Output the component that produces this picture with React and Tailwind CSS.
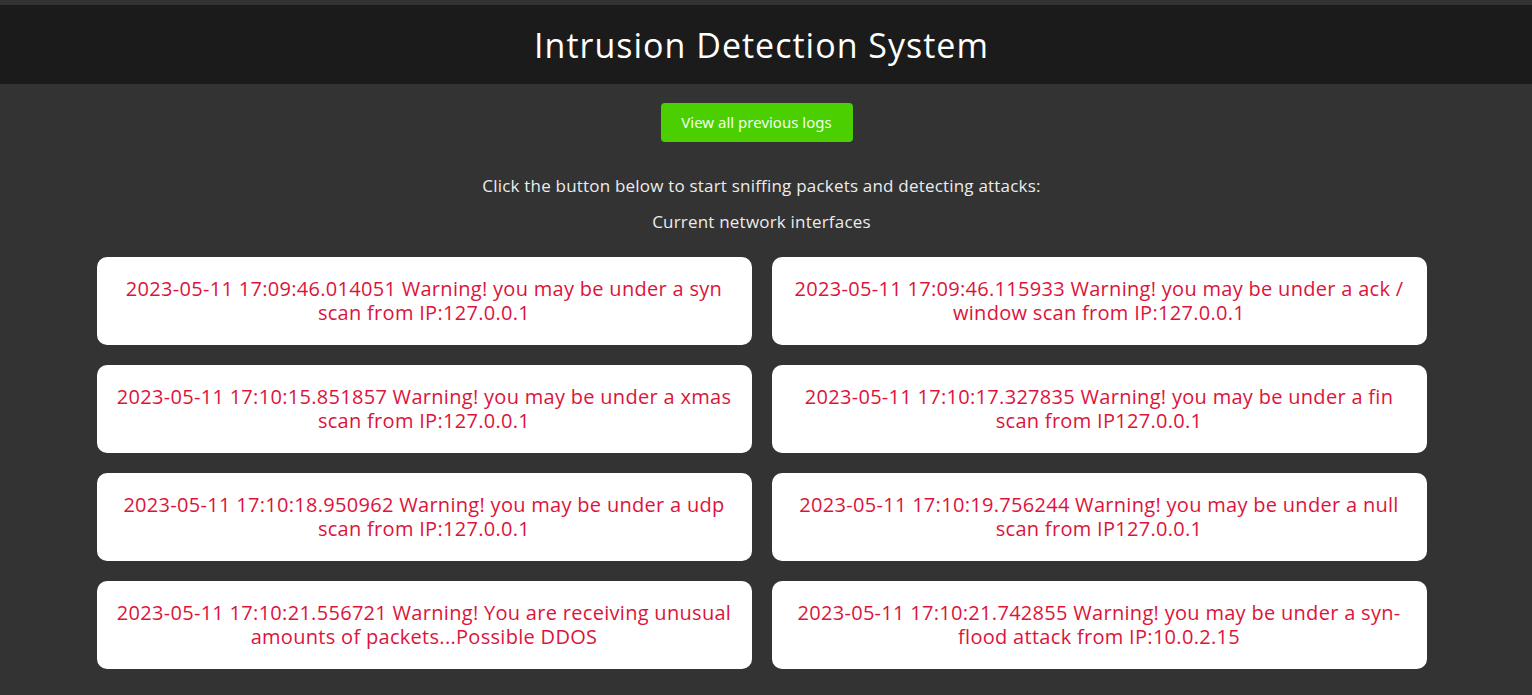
export default function App() {
  const logs = [
    ["2023-05-11 17:09:46.014051 Warning! you may be under a syn", "scan from IP:127.0.0.1"],
    ["2023-05-11 17:09:46.115933 Warning! you may be under a ack /", "window scan from IP:127.0.0.1"],
    ["2023-05-11 17:10:15.851857 Warning! you may be under a xmas", "scan from IP:127.0.0.1"],
    ["2023-05-11 17:10:17.327835 Warning! you may be under a fin", "scan from IP127.0.0.1"],
    ["2023-05-11 17:10:18.950962 Warning! you may be under a udp", "scan from IP:127.0.0.1"],
    ["2023-05-11 17:10:19.756244 Warning! you may be under a null", "scan from IP127.0.0.1"],
    ["2023-05-11 17:10:21.556721 Warning! You are receiving unusual", "amounts of packets...Possible DDOS"],
    ["2023-05-11 17:10:21.742855 Warning! you may be under a syn-", "flood attack from IP:10.0.2.15"],
  ];
  return (
    <div className="min-h-[695px] w-full bg-[#333333] pt-[5px] font-['Open_Sans',sans-serif]">
      <header className="h-[79px] w-full bg-[#1b1b1b]">
        <div className="w-[1523px] h-full flex items-center justify-center">
          <h1 className="text-white text-[34px] tracking-[1px] leading-none">Intrusion Detection System</h1>
        </div>
      </header>
      <div className="w-[1523px] flex flex-col items-center pt-[19px]">
        <button className="mr-[10px] h-[39px] w-[192px] rounded-[4px] bg-[#4ccf00] text-[#f0fff0] text-[15px] font-['Noto_Sans',sans-serif]">
          View all previous logs
        </button>
        <p className="mt-[33px] text-[#ececec] text-[17px] tracking-[0.2px] leading-[22px]">
          Click the button below to start sniffing packets and detecting attacks:
        </p>
        <p className="mt-[14px] text-[#ececec] text-[17px] tracking-[0.2px] leading-[22px]">Current network interfaces</p>
        <div className="mt-[24px] w-[1330px] grid grid-cols-2 gap-x-[20px] gap-y-[20px]">
          {logs.map((l, i) => (
            <div key={i} className="h-[88px] rounded-[10px] bg-white flex items-center justify-center text-center text-[#dc143c] text-[20px] tracking-[0.3px] leading-[24px]">
              <div>
                {l[0]}
                <br />
                {l[1]}
              </div>
            </div>
          ))}
        </div>
      </div>
    </div>
  );
}
